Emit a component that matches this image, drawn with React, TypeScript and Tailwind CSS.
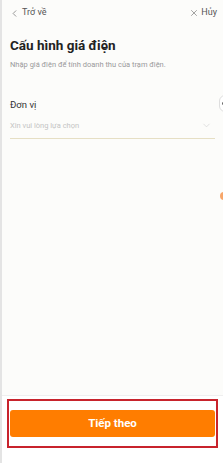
import { ChevronLeft, ChevronDown, X } from 'lucide-react'

export default function App() {
    return (
        <div className="relative flex h-[463px] w-[223px] flex-col overflow-hidden border-l-2 border-[#e4e4e4] bg-[#fcfcfa] font-['Roboto',sans-serif]">
            {/* top bar */}
            <div className="flex h-[26px] items-center justify-between pl-[7px] pr-[6px] text-[9px] text-[#555]">
                <div className="flex items-center gap-[2px]">
                    <ChevronLeft size={11} strokeWidth={1.3} />
                    <span>Trở về</span>
                </div>
                <div className="flex items-center gap-[2px]">
                    <X size={10} strokeWidth={1.3} />
                    <span>Hủy</span>
                </div>
            </div>

            <div className="flex flex-col px-[8px]">
                <h1 className="mt-[11px] text-[13.5px] font-bold leading-[16px] text-[#222]">Cấu hình giá điện</h1>
                <p className="mt-[7px] text-[7.5px] leading-[10px] text-[#9a9a9a]">Nhập giá điện để tính doanh thu của trạm điện.</p>

                <div className="mt-[29px] flex flex-col">
                    <span className="text-[9.5px] leading-[12px] text-[#333]">Đơn vị</span>
                    <div className="mt-[9px] flex items-center justify-between border-b border-[#e6dfc4] pb-[7px] pr-[3px]">
                        <span className="text-[7.5px] leading-[10px] text-[#c4c4c4]">Xin vui lòng lựa chọn</span>
                        <ChevronDown size={11} strokeWidth={1.2} className="text-[#c9c9c9]" />
                    </div>
                </div>
            </div>

            {/* floating edge widgets */}
            <div className="absolute right-[-8px] top-[95px] flex h-[17px] w-[12px] items-center justify-start rounded-l-[6px] border border-[#dedede] bg-white pl-[2px]">
                <div className="h-[3px] w-[3px] rounded-full bg-[#666]" />
            </div>
            <div className="absolute right-[-5px] top-[192px] h-[8px] w-[8px] rounded-full bg-[#f7a66a]" />

            <div className="mt-auto border-t border-[#efefef] bg-white pb-[15px] pt-[3px]">
                <div className="mx-[5px] border-2 border-[#c8232c] px-[1px] py-[9px]">
                    <button className="flex h-[27px] w-full items-center justify-center rounded-[3px] bg-[#ff7d00] text-[11.5px] font-bold text-white">
                        Tiếp theo
                    </button>
                </div>
            </div>
        </div>
    )
}
